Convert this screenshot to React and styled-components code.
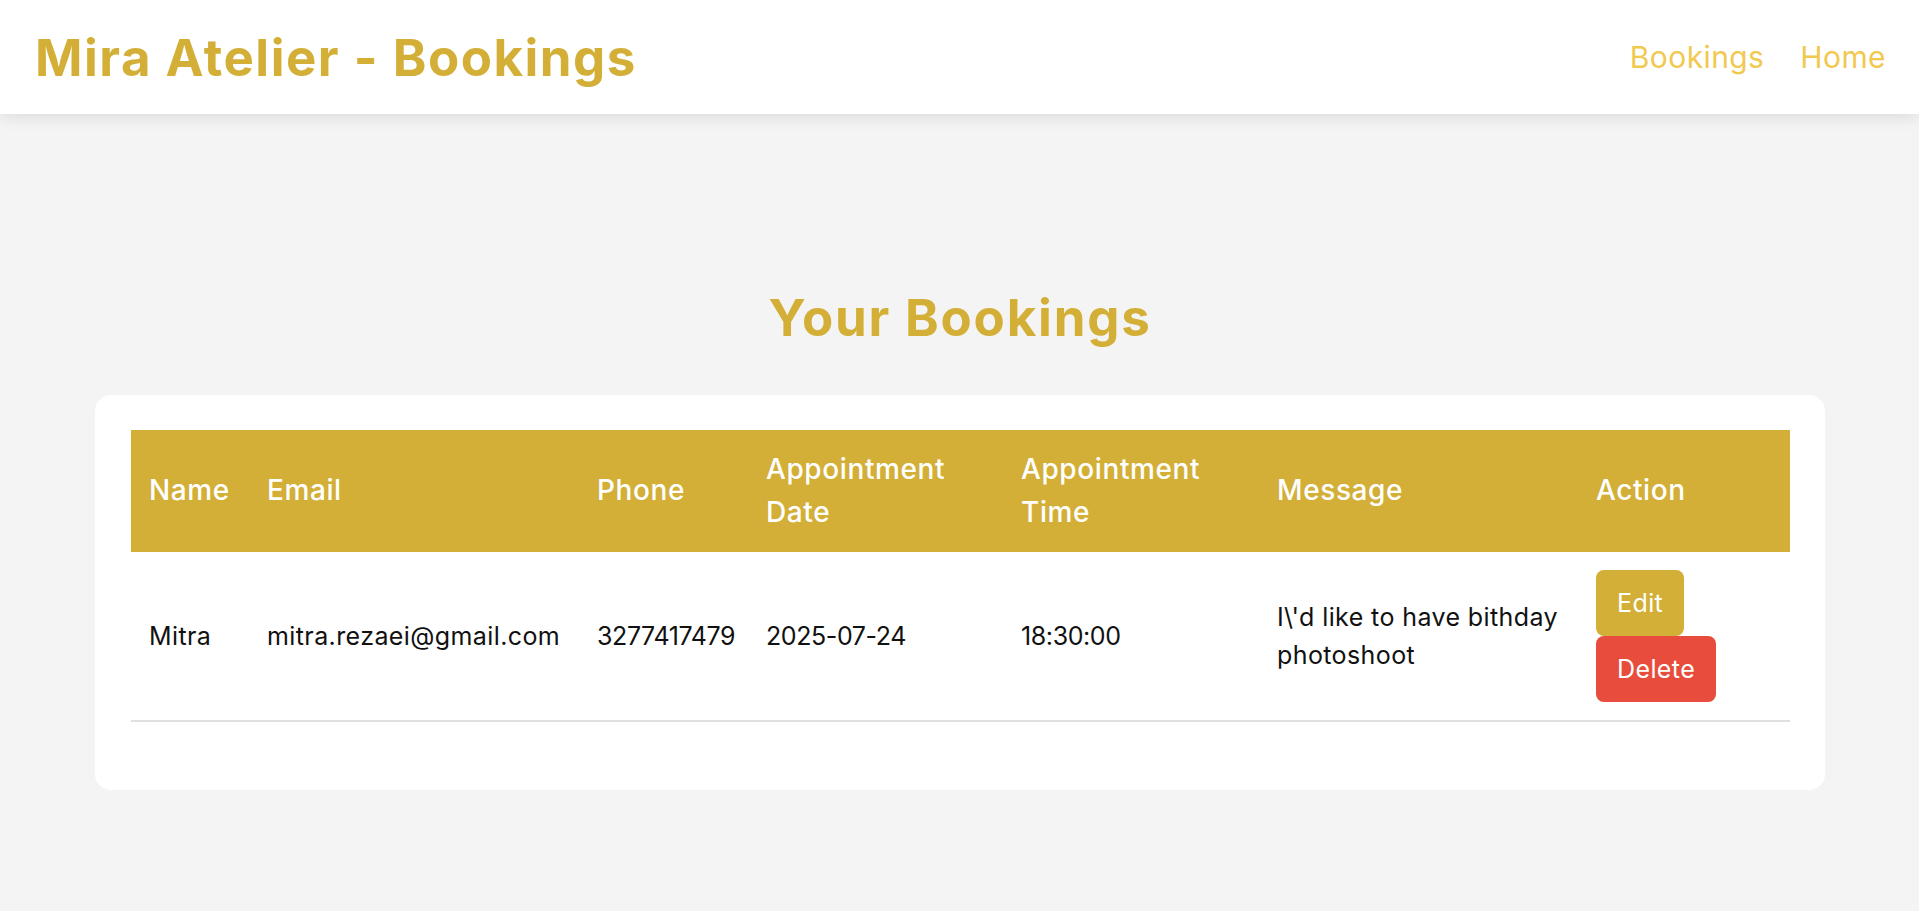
import React from "react";
import styled, { createGlobalStyle } from "styled-components";

const GlobalStyle = createGlobalStyle`
  *, *::before, *::after {
    box-sizing: border-box;
  }

  body {
    margin: 0;
    background-color: #f4f4f4;
    font-family: Inter, "Liberation Sans", sans-serif;
    color: #111;
  }
`;

const Header = styled.header`
  height: 114px;
  display: flex;
  align-items: center;
  justify-content: space-between;
  padding: 0 33px 0 37px;
  background-color: #fff;
  box-shadow: 0 3px 15px rgba(0, 0, 0, 0.1);
  position: relative;
  z-index: 1;
`;

const Brand = styled.h1`
  margin: 0 0 0 -2px;
  font-size: 51px;
  font-weight: 700;
  letter-spacing: 1.5px;
  color: #d4af37;
`;

const Nav = styled.nav`
  display: flex;
  gap: 36px;
`;

const NavLink = styled.a`
  font-size: 30px;
  letter-spacing: 0.4px;
  color: #f1c94f;
  text-decoration: none;
  cursor: pointer;
`;

const Main = styled.main`
  padding: 163px 94px 122px 95px;
`;

const PageTitle = styled.h2`
  margin: 0 0 36px;
  text-align: center;
  font-size: 51px;
  font-weight: 700;
  letter-spacing: 1.8px;
  line-height: 1.6;
  color: #d4af37;
`;

const Card = styled.section`
  background-color: #fff;
  border-radius: 16px;
  padding: 35px 35px 68px 36px;
`;

const Table = styled.table`
  width: 100%;
  border-collapse: collapse;
  table-layout: fixed;
`;

const Th = styled.th`
  width: ${(p) => p.$w}px;
  background-color: #d3af37;
  color: #fff;
  text-align: left;
  padding: 18px;
  font-size: 28px;
  font-weight: 500;
  letter-spacing: 0.6px;
  line-height: 43px;
  vertical-align: middle;
`;

const Td = styled.td`
  padding: 18px;
  font-size: 25px;
  letter-spacing: ${(p) => (p.$numeric ? "-0.4px" : "0.4px")};
  line-height: 38px;
  vertical-align: middle;
  border-bottom: 2px solid #e0e0e0;
`;

const ActionStack = styled.div`
  display: flex;
  flex-direction: column;
  align-items: flex-start;
`;

const Button = styled.button`
  border: none;
  border-radius: 8px;
  padding: 14px 21px;
  font-family: inherit;
  font-size: 25px;
  letter-spacing: 0.4px;
  line-height: 38px;
  color: #fff;
  cursor: pointer;
  background-color: ${(p) => (p.$danger ? "#e74c3c" : "#d4af37")};
`;

const columns = [
  { label: "Name", w: 118 },
  { label: "Email", w: 330 },
  { label: "Phone", w: 169 },
  { label: "Appointment Date", w: 255 },
  { label: "Appointment Time", w: 256 },
  { label: "Message", w: 319 },
  { label: "Action", w: 212 },
];

const bookings = [
  {
    id: 1,
    name: "Mitra",
    email: "mitra.rezaei@gmail.com",
    phone: "3277417479",
    date: "2025-07-24",
    time: "18:30:00",
    message: "I\\'d like to have bithday photoshoot",
  },
];

export default function App() {
  return (
    <>
      <GlobalStyle />
      <Header>
        <Brand>Mira Atelier - Bookings</Brand>
        <Nav>
          <NavLink>Bookings</NavLink>
          <NavLink>Home</NavLink>
        </Nav>
      </Header>
      <Main>
        <PageTitle>Your Bookings</PageTitle>
        <Card>
          <Table>
            <thead>
              <tr>
                {columns.map((c) => (
                  <Th key={c.label} $w={c.w}>
                    {c.label}
                  </Th>
                ))}
              </tr>
            </thead>
            <tbody>
              {bookings.map((b) => (
                <tr key={b.id}>
                  <Td>{b.name}</Td>
                  <Td>{b.email}</Td>
                  <Td $numeric>{b.phone}</Td>
                  <Td $numeric>{b.date}</Td>
                  <Td $numeric>{b.time}</Td>
                  <Td>{b.message}</Td>
                  <Td>
                    <ActionStack>
                      <Button>Edit</Button>
                      <Button $danger>Delete</Button>
                    </ActionStack>
                  </Td>
                </tr>
              ))}
            </tbody>
          </Table>
        </Card>
      </Main>
    </>
  );
}
